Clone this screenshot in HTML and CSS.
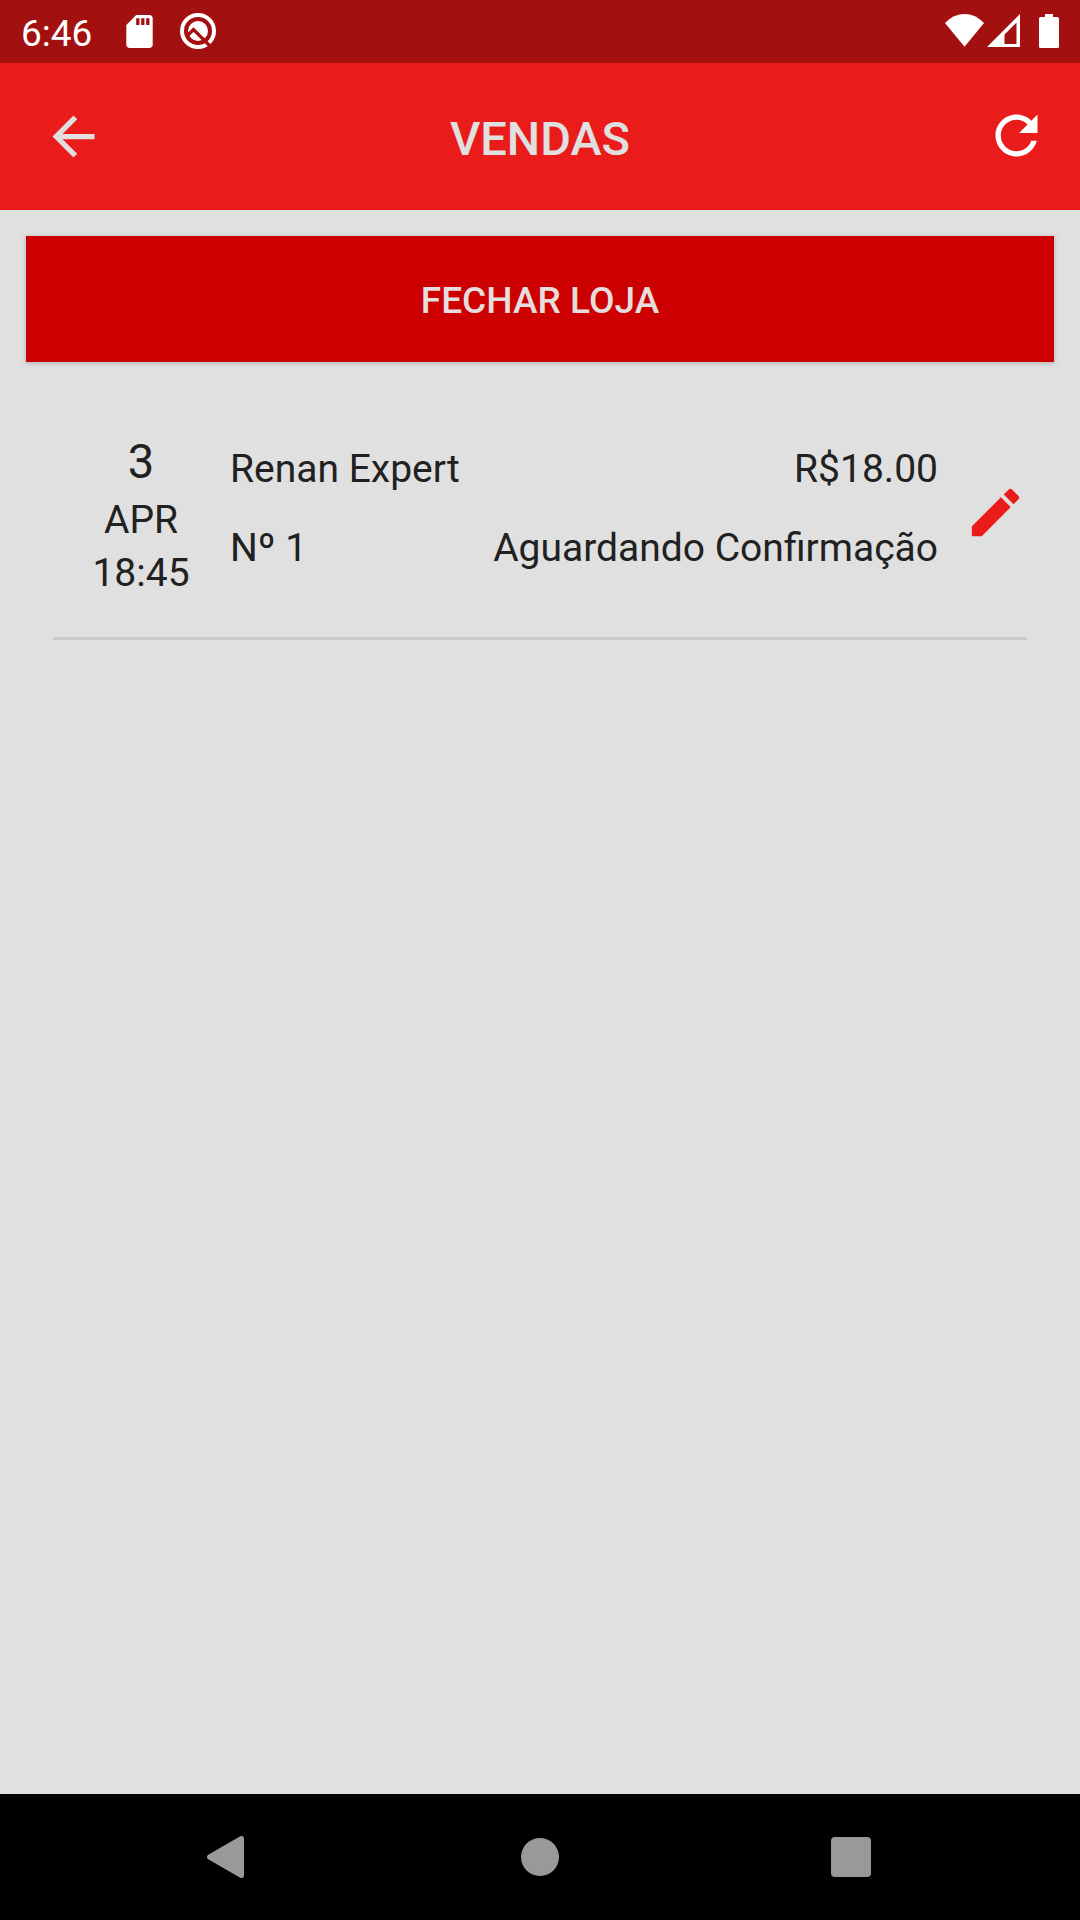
FILE: index.html
```html
<!DOCTYPE html>
<html lang="pt-BR">
<head>
<meta charset="utf-8">
<title>Vendas</title>
<link rel="stylesheet" href="styles.css">
</head>
<body>
<div class="screen">
  <div class="status-bar">
    <div class="status-left">
      <span class="clock">6:46</span>
      <svg class="icon-sd" viewBox="4 2 16 20"><path d="M18 2h-8L4.020 8 4 20c0 1.100.9 2 2 2h12c1.100 0 2-.9 2-2V4c0-1.100-.9-2-2-2zm-6 6h-2V4h2v4zm3 0h-2V4h2v4zm3 0h-2V4h2v4z"/></svg>
      <svg class="icon-q" viewBox="0 0 38 38">
        <circle class="ring" cx="19" cy="19" r="16"/>
        <circle cx="19" cy="19" r="10"/>
        <path class="cut" d="M8.500 23.500L14.500 17.500L32.500 35.500"/>
      </svg>
    </div>
    <div class="status-right">
      <svg class="icon-wifi" viewBox="0 0 39 33"><path d="M19.500 32.700L0 9Q8.500 0 19.500 0T39 9z"/></svg>
      <svg class="icon-signal" viewBox="0 0 33 33"><path fill-rule="evenodd" d="M0 33L33 0V33zM17.500 30H29.500V8.500L17.500 20.500z"/></svg>
      <svg class="icon-battery" viewBox="0 0 20 34"><path d="M6 0H14V3H18.500Q20 3 20 4.500V32.500Q20 34 18.500 34H1.500Q0 34 0 32.500V4.500Q0 3 1.500 3H6z"/></svg>
    </div>
  </div>

  <header class="app-bar">
    <svg class="icon-back" viewBox="0 0 24 24"><path d="M20 11H7.830l5.590-5.590L12 4l-8 8 8 8 1.410-1.410L7.830 13H20v-2z"/></svg>
    <h1 class="title">VENDAS</h1>
    <svg class="icon-refresh" viewBox="0 0 24 24"><path d="M17.650 6.350C16.200 4.900 14.210 4 12 4c-4.420 0-7.990 3.580-7.990 8s3.570 8 7.990 8c3.730 0 6.840-2.550 7.730-6h-2.080c-.82 2.330-3.040 4-5.650 4-3.310 0-6-2.690-6-6s2.690-6 6-6c1.660 0 3.140.69 4.220 1.780L13 11h7V4l-2.350 2.350z"/></svg>
  </header>

  <main class="content">
    <button class="close-store">FECHAR LOJA</button>
    <article class="order">
      <div class="date">
        <span class="day">3</span>
        <span class="month">APR</span>
        <span class="time">18:45</span>
      </div>
      <div class="details">
        <div class="line"><span class="customer">Renan Expert</span><span class="price">R$18.00</span></div>
        <div class="line"><span class="number">Nº 1</span><span class="state">Aguardando Confirmação</span></div>
      </div>
      <svg class="icon-edit" viewBox="0 0 24 24"><path d="M3 17.250V21h3.750L17.810 9.940l-3.750-3.750L3 17.250zM20.710 7.040c.39-.39.39-1.020 0-1.410l-2.340-2.340c-.39-.39-1.020-.39-1.410 0l-1.830 1.830 3.750 3.750 1.830-1.830z"/></svg>
    </article>
  </main>

  <nav class="nav-bar">
    <svg class="nav-back" viewBox="0 0 37 42"><path d="M2.500 21L34.500 2.500V39.500z"/></svg>
    <span class="nav-home"></span>
    <span class="nav-recent"></span>
  </nav>
</div>
</body>
</html>
```
FILE: styles.css
```css
* { box-sizing: border-box; }

body {
  margin: 0;
  font-family: Roboto, sans-serif;
  color: #212121;
}

svg { display: block; flex: none; }

.screen {
  display: flex;
  flex-direction: column;
  width: 1080px;
  height: 1920px;
  overflow: hidden;
  background: #e0e0e0;
}

.status-bar {
  display: flex;
  justify-content: space-between;
  height: 63px;
  padding: 0 21px;
  background: #a31010;
  color: #fff;
  fill: #fff;
}

.status-left,
.status-right { display: flex; }

.clock {
  width: 105px;
  padding-top: 10px;
  font-size: 37px;
  line-height: 48px;
}

.icon-sd { width: 27px; height: 33px; margin-top: 15px; }
.icon-q { width: 38px; height: 38px; margin: 12px 0 0 26px; }
.ring { fill: none; stroke: #fff; stroke-width: 4; }
.cut { fill: none; stroke: #a31010; stroke-width: 3.200; }

.icon-wifi { width: 39px; height: 33px; margin-top: 14px; }
.icon-signal { width: 33px; height: 33px; margin: 14px 0 0 3px; }
.icon-battery { width: 20px; height: 34px; margin: 14px 0 0 19px; }

.app-bar {
  display: flex;
  align-items: center;
  justify-content: space-between;
  height: 147px;
  padding: 0 32px 0 42px;
  background: #ea1b1b;
}

.icon-back { width: 63px; height: 63px; fill: #e0e0e0; }
.icon-refresh { width: 63px; height: 63px; margin-top: -2px; fill: #fff; }

.title {
  margin: 5px 0 0;
  padding-right: 10px;
  font-size: 47px;
  font-weight: 500;
  line-height: 56px;
  color: #e0e0e0;
}

.content {
  flex: 1;
  padding: 26px 26px 0;
}

.close-store {
  display: block;
  width: 1028px;
  height: 126px;
  padding: 3px 0 0;
  border: 0;
  background: #c00;
  box-shadow: 0 1px 5px rgba(0, 0, 0, .22);
  font: 500 37px Roboto, sans-serif;
  letter-spacing: .05px;
  color: #e8dddd;
}

.order {
  display: flex;
  height: 278px;
  margin: 0 27px;
  padding-top: 72px;
  border-bottom: 3px solid #cacaca;
  font-size: 39px;
}

.date {
  display: flex;
  flex-direction: column;
  align-items: center;
  width: 176px;
  line-height: 53px;
}

.day {
  margin-bottom: 4px;
  font-size: 47.250px;
  line-height: 56px;
}

.details {
  display: flex;
  flex-direction: column;
  gap: 33px;
  width: 709px;
  padding-top: 12px;
  padding-left: 1px;
  line-height: 46px;
}

.line {
  display: flex;
  justify-content: space-between;
}

.icon-edit {
  width: 63px;
  height: 63px;
  margin: 47px 0 0 26px;
  fill: #ea1b1b;
}

.nav-bar {
  display: grid;
  grid-template-columns: 1fr auto 1fr;
  align-items: center;
  height: 126px;
  padding: 0 209px;
  background: #000;
}

.nav-back {
  width: 37px;
  height: 42px;
  margin-left: -2px;
  fill: #999;
  stroke: #999;
  stroke-width: 5;
  stroke-linejoin: round;
}

.nav-home {
  width: 38px;
  height: 38px;
  border-radius: 50%;
  background: #999;
}

.nav-recent {
  justify-self: end;
  width: 40px;
  height: 40px;
  border-radius: 4px;
  background: #999;
}
```
